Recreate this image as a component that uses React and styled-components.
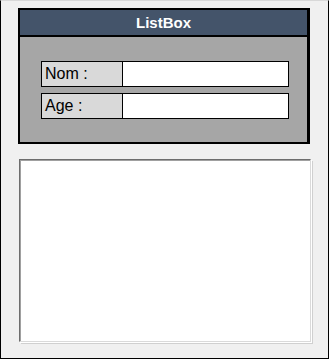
import styled, { createGlobalStyle } from 'styled-components';

const GlobalStyle = createGlobalStyle`
  * {
    box-sizing: border-box;
  }
  body {
    margin: 0;
    background: #f0f0f0;
    font-family: "Liberation Sans", Arial, sans-serif;
  }
`;

const Window = styled.div`
  width: 329px;
  height: 359px;
  border: 1px solid #000;
  border-top-color: #d8d8d8;
  background: #f0f0f0;
  padding: 7px 0 0 17px;
  display: flex;
  flex-direction: column;
  gap: 15px;
`;

const Panel = styled.section`
  width: 292px;
  border: 2px solid #000;
  border-right-width: 3px;
  background: #a6a6a6;
`;

const Header = styled.h1`
  margin: 0;
  height: 27px;
  background: #44546a;
  border-bottom: 2px solid #000;
  color: #fff;
  font-size: 15px;
  font-weight: bold;
  display: flex;
  align-items: center;
  justify-content: center;
`;

const Fields = styled.div`
  padding: 24px 18px 23px 21px;
  display: flex;
  flex-direction: column;
  gap: 6px;
`;

const Row = styled.label`
  height: 26px;
  display: grid;
  grid-template-columns: 81px 1fr;
  border: 1px solid #000;
`;

const Label = styled.span`
  background: #d9d9d9;
  border-right: 1px solid #000;
  font-size: 16px;
  color: #000;
  padding-left: 3px;
  display: flex;
  align-items: center;
`;

const Input = styled.input`
  border: none;
  outline: none;
  background: #fff;
  width: 100%;
  height: 100%;
  padding: 0 4px;
  font-size: 15px;
`;

const List = styled.div`
  margin-left: 1px;
  width: 292px;
  height: 183px;
  background: #fff;
  border-top: 1px solid #6d6d6d;
  border-left: 1px solid #6d6d6d;
  border-right: 1px solid #dadada;
  border-bottom: 1px solid #dadada;
  box-shadow: inset 1px 1px 0 #a0a0a0, 1px 1px 0 #fff, 2px 2px 0 #d0d0d0;
`;

const App = () => {
  return (
    <>
      <GlobalStyle />
      <Window>
        <Panel>
          <Header>ListBox</Header>
          <Fields>
            <Row>
              <Label>Nom :</Label>
              <Input type="text" />
            </Row>
            <Row>
              <Label>Age :</Label>
              <Input type="text" />
            </Row>
          </Fields>
        </Panel>
        <List />
      </Window>
    </>
  );
};

export default App;
